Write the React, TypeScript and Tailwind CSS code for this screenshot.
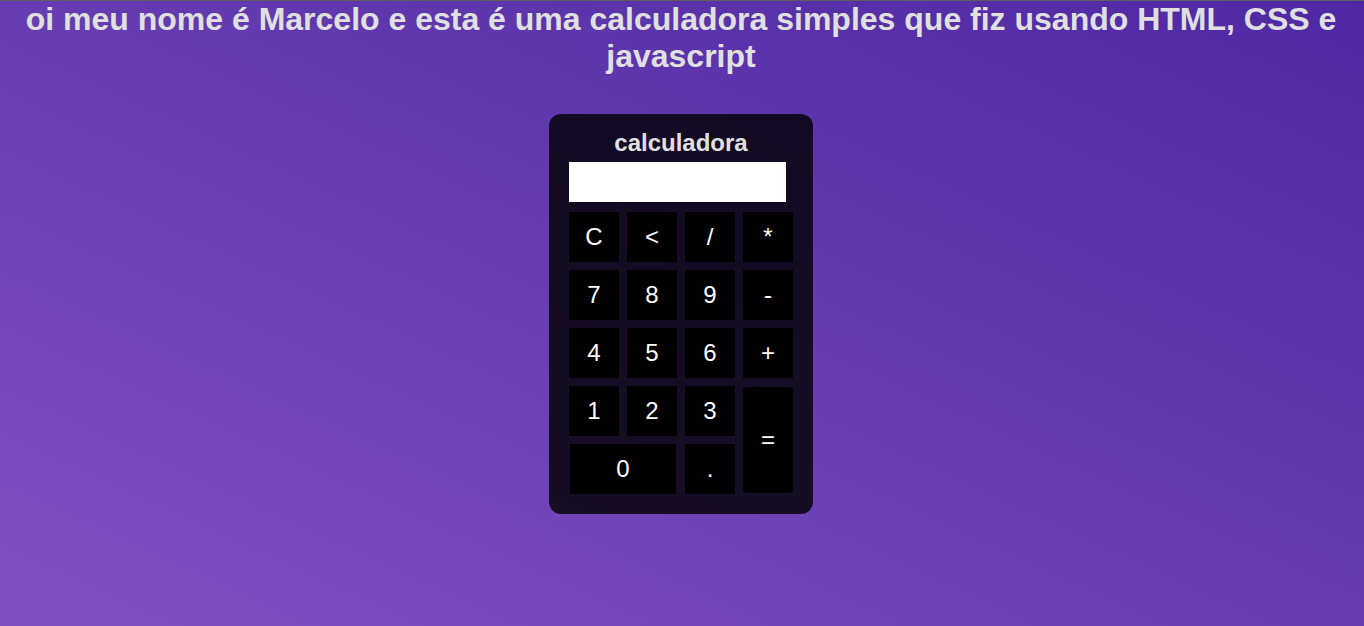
const keys: { label: string; className?: string }[] = [
  { label: 'C' },
  { label: '<' },
  { label: '/' },
  { label: '*' },
  { label: '7' },
  { label: '8' },
  { label: '9' },
  { label: '-' },
  { label: '4' },
  { label: '5' },
  { label: '6' },
  { label: '+' },
  { label: '1' },
  { label: '2' },
  { label: '3' },
  { label: '=', className: 'row-span-2 self-center h-[106px]' },
  { label: '0', className: 'col-span-2 justify-self-center w-[106px]' },
  { label: '.' },
]

export default function App() {
  return (
    <div
      className="min-h-[626px] border-t border-[#5e5e5e] bg-gradient-to-tr from-[#8050c0] to-[#4e27a3] pr-0.5 text-center"
      style={{ fontFamily: '"Liberation Sans", Arial, sans-serif' }}
    >
      <h1 className="mx-auto text-[32px] font-bold leading-[36.8px] text-[#e0e0e0]">
        oi meu nome é Marcelo e esta é uma calculadora simples que fiz usando HTML, CSS e
        javascript
      </h1>

      <div className="mx-auto mt-[39px] w-[264px] rounded-xl bg-black/80 px-5 pb-5 pt-[17px]">
        <h2 className="mb-[7px] h-6 text-[24px] font-bold leading-6 text-[#e0e0e0]">
          calculadora
        </h2>
        <input
          type="text"
          className="block h-10 w-[217px] border-0 bg-white outline-none"
          readOnly
        />
        <div className="mt-2.5 grid grid-cols-[repeat(4,50px)] grid-rows-[repeat(5,50px)] gap-2">
          {keys.map((k) => (
            <button
              key={k.label}
              className={`flex items-center justify-center bg-black text-[24px] text-white ${k.className ?? ''}`}
            >
              {k.label}
            </button>
          ))}
        </div>
      </div>
    </div>
  )
}
